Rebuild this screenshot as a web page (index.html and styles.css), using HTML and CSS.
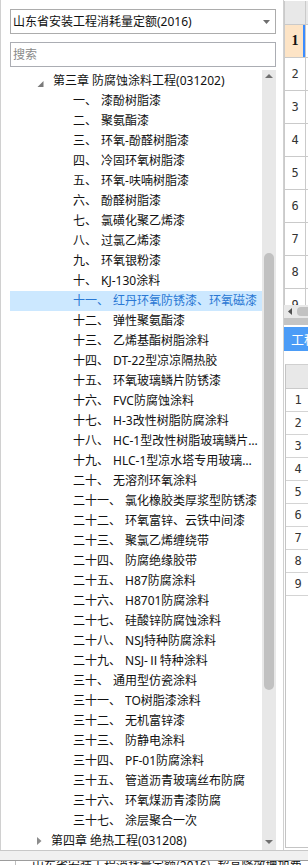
FILE: index.html
```html
<!DOCTYPE html>
<html lang="zh">
<head>
    <meta charset="UTF-8">
    <meta name="viewport" content="width=device-width, initial-scale=1.0">
    <title>定额章节</title>
    <link rel="stylesheet" href="styles.css">
</head>
<body>

<div class="main">
    <div class="side">
        <div class="combo">
            <span class="combo-text">山东省安装工程消耗量定额(2016)</span>
            <svg class="combo-arrow" width="7" height="4" viewBox="0 0 7 4"><polygon points="0,0 7,0 3.5,4" fill="#6e6e6e"/></svg>
        </div>
        <input class="search" type="text" placeholder="搜索">

        <div class="tree-box">
            <div class="tree">
                <div class="row chapter">
                    <svg class="toggle open" width="6" height="6" viewBox="0 0 6 6"><polygon points="6,0 6,6 0,6" fill="#7a7a7a"/></svg>
                    <span>第三章 防腐蚀涂料工程(031202)</span>
                </div>
                <div class="row item"><span class="num">一、</span><span class="label">漆酚树脂漆</span></div>
                <div class="row item"><span class="num">二、</span><span class="label">聚氨酯漆</span></div>
                <div class="row item"><span class="num">三、</span><span class="label">环氧-酚醛树脂漆</span></div>
                <div class="row item"><span class="num">四、</span><span class="label">冷固环氧树脂漆</span></div>
                <div class="row item"><span class="num">五、</span><span class="label">环氧-呋喃树脂漆</span></div>
                <div class="row item"><span class="num">六、</span><span class="label">酚醛树脂漆</span></div>
                <div class="row item"><span class="num">七、</span><span class="label">氯磺化聚乙烯漆</span></div>
                <div class="row item"><span class="num">八、</span><span class="label">过氯乙烯漆</span></div>
                <div class="row item"><span class="num">九、</span><span class="label">环氧银粉漆</span></div>
                <div class="row item"><span class="num">十、</span><span class="label">KJ-130涂料</span></div>
                <div class="row item selected"><span class="num">十一、</span><span class="label">红丹环氧防锈漆、环氧磁漆</span></div>
                <div class="row item"><span class="num">十二、</span><span class="label">弹性聚氨酯漆</span></div>
                <div class="row item"><span class="num">十三、</span><span class="label">乙烯基酯树脂涂料</span></div>
                <div class="row item"><span class="num">十四、</span><span class="label">DT-22型凉凉隔热胶</span></div>
                <div class="row item"><span class="num">十五、</span><span class="label">环氧玻璃鳞片防锈漆</span></div>
                <div class="row item"><span class="num">十六、</span><span class="label">FVC防腐蚀涂料</span></div>
                <div class="row item"><span class="num">十七、</span><span class="label">H-3改性树脂防腐涂料</span></div>
                <div class="row item"><span class="num">十八、</span><span class="label">HC-1型改性树脂玻璃鳞片防腐涂料</span></div>
                <div class="row item"><span class="num">十九、</span><span class="label">HLC-1型凉水塔专用玻璃钢防腐涂料</span></div>
                <div class="row item"><span class="num">二十、</span><span class="label">无溶剂环氧涂料</span></div>
                <div class="row item"><span class="num">二十一、</span><span class="label">氯化橡胶类厚浆型防锈漆</span></div>
                <div class="row item"><span class="num">二十二、</span><span class="label">环氧富锌、云铁中间漆</span></div>
                <div class="row item"><span class="num">二十三、</span><span class="label">聚氯乙烯缠绕带</span></div>
                <div class="row item"><span class="num">二十四、</span><span class="label">防腐绝缘胶带</span></div>
                <div class="row item"><span class="num">二十五、</span><span class="label">H87防腐涂料</span></div>
                <div class="row item"><span class="num">二十六、</span><span class="label">H8701防腐涂料</span></div>
                <div class="row item"><span class="num">二十七、</span><span class="label">硅酸锌防腐蚀涂料</span></div>
                <div class="row item"><span class="num">二十八、</span><span class="label">NSJ特种防腐涂料</span></div>
                <div class="row item"><span class="num">二十九、</span><span class="label">NSJ-Ⅱ特种涂料</span></div>
                <div class="row item"><span class="num">三十、</span><span class="label">通用型仿瓷涂料</span></div>
                <div class="row item"><span class="num">三十一、</span><span class="label">TO树脂漆涂料</span></div>
                <div class="row item"><span class="num">三十二、</span><span class="label">无机富锌漆</span></div>
                <div class="row item"><span class="num">三十三、</span><span class="label">防静电涂料</span></div>
                <div class="row item"><span class="num">三十四、</span><span class="label">PF-01防腐涂料</span></div>
                <div class="row item"><span class="num">三十五、</span><span class="label">管道沥青玻璃丝布防腐</span></div>
                <div class="row item"><span class="num">三十六、</span><span class="label">环氧煤沥青漆防腐</span></div>
                <div class="row item"><span class="num">三十七、</span><span class="label">涂层聚合一次</span></div>
                <div class="row chapter">
                    <svg class="toggle" width="5" height="8" viewBox="0 0 5 8"><polygon points="0,0 4.5,4 0,8" fill="#8c8c8c"/></svg>
                    <span>第四章 绝热工程(031208)</span>
                </div>
            </div>

            <div class="vscroll">
                <svg class="vs-up" width="8" height="4" viewBox="0 0 8 4"><polygon points="0,4 8,4 4,0" fill="#707070"/></svg>
                <div class="vs-thumb"></div>
                <svg class="vs-down" width="8" height="4" viewBox="0 0 8 4"><polygon points="0,0 8,0 4,4" fill="#707070"/></svg>
            </div>
        </div>
    </div>

    <div class="splitter"></div>

    <div class="right">
        <div class="sheet">
            <div class="srow head"><div class="rh"></div><div class="cell"></div></div>
            <div class="srow"><div class="rh active">1</div><div class="cell"></div></div>
            <div class="srow"><div class="rh">2</div><div class="cell"></div></div>
            <div class="srow"><div class="rh">3</div><div class="cell"></div></div>
            <div class="srow"><div class="rh">4</div><div class="cell"></div></div>
            <div class="srow"><div class="rh">5</div><div class="cell"></div></div>
            <div class="srow"><div class="rh">6</div><div class="cell"></div></div>
            <div class="srow"><div class="rh">7</div><div class="cell"></div></div>
            <div class="srow"><div class="rh">8</div><div class="cell"></div></div>
            <div class="srow"><div class="rh">9</div><div class="cell"></div></div>
        </div>
        <div class="hscroll">
            <svg class="hs-left" width="4" height="7" viewBox="0 0 4 7"><polygon points="4,0 4,7 0,3.5" fill="#505050"/></svg>
            <div class="hs-thumb"></div>
        </div>
        <div class="tabbar"></div>
        <div class="tab">工程量</div>
        <div class="grid2">
            <div class="grow head"></div>
            <div class="grow"><span class="gnum">1</span></div>
            <div class="grow"><span class="gnum">2</span></div>
            <div class="grow"><span class="gnum">3</span></div>
            <div class="grow"><span class="gnum">4</span></div>
            <div class="grow"><span class="gnum">5</span></div>
            <div class="grow"><span class="gnum">6</span></div>
            <div class="grow"><span class="gnum">7</span></div>
            <div class="grow"><span class="gnum">8</span></div>
            <div class="grow"><span class="gnum">9</span></div>
        </div>
    </div>
</div>

<div class="status">
    <div class="status-line">
        <span class="status-cell"></span>
        <span class="status-text">山东省安装工程消耗量定额(2016)_超高降效增加费，脚手架搭拆费用</span>
    </div>
</div>

</body>
</html>
```

FILE: styles.css
```css
* {
    box-sizing: border-box;
}
body {
    margin: 0;
    width: 308px;
    height: 865px;
    overflow: hidden;
    background-color: #f0f0f0;
    font-family: "Noto Sans", "Noto Sans CJK SC", sans-serif;
    font-size: 12px;
    color: #111;
}

/* main area */
.main {
    display: flex;
    height: 851px;
    border-bottom: 1px solid #c8c8c8;
}
.side {
    width: 283px;
    display: flex;
    flex-direction: column;
    padding: 9px 7px 0 9px;
    border-left: 1px solid #d0d0d0;
    background-color: #fff;
}
.combo {
    display: flex;
    align-items: center;
    height: 25px;
    padding: 0 5px 0 2px;
    border: 1px solid #acacac;
    background-color: #fff;
}
.combo-text {
    flex: 1;
    line-height: 23px;
    white-space: nowrap;
}
.search {
    height: 25px;
    margin: 8px 0 0;
    padding: 0 2px;
    border: 1px solid #abadb3;
    font-family: "Noto Sans", "Noto Sans CJK SC", sans-serif;
    font-size: 12px;
    outline: none;
}
.search::placeholder {
    color: #8a8a8a;
}

/* tree */
.tree-box {
    flex: 1;
    display: flex;
    margin-top: 3px;
    min-height: 0;
}
.tree {
    flex: 1;
    min-width: 0;
    padding-top: 1px;
    overflow: hidden;
}
.row {
    display: flex;
    align-items: center;
    height: 20px;
    line-height: 20px;
    white-space: nowrap;
}
.chapter {
    padding-left: 27px;
}
.chapter span {
    margin-left: 9px;
}
.toggle {
    flex: none;
}
.toggle.open {
    width: 7px;
    margin-top: 6px;
}
.item {
    padding-left: 63px;
    padding-right: 2px;
    gap: 4px;
}
.num {
    flex: none;
}
.label {
    flex: 0 1 auto;
    min-width: 0;
    overflow: hidden;
    text-overflow: ellipsis;
}
.selected {
    background-color: #cce8ff;
    color: #2a78d4;
}

/* vertical scrollbar */
.vscroll {
    width: 14px;
    flex: none;
    display: flex;
    flex-direction: column;
    align-items: center;
    background-color: #e8e8e8;
}
.vs-up {
    margin-top: 4px;
}
.vs-thumb {
    width: 10px;
    height: 437px;
    margin-top: 175px;
    border-radius: 5px;
    background-color: #c1c1c1;
}
.vs-down {
    margin-top: auto;
    margin-bottom: 6px;
}

.splitter {
    width: 1px;
    background-color: #d0d0d0;
}

/* right panel */
.right {
    flex: 1;
    min-width: 0;
    display: flex;
    flex-direction: column;
    background-color: #fff;
    overflow: hidden;
    font-family: "DejaVu Sans Mono", monospace;
    font-size: 12px;
    color: #333;
}
.sheet {
    height: 305px;
    padding-top: 1px;
    overflow: hidden;
}
.srow {
    display: flex;
    height: 33px;
    border-bottom: 1px solid #cacaca;
}
.srow.head {
    height: 24px;
    background-color: #e8e8e8;
}
.rh {
    flex: none;
    width: 22px;
    display: flex;
    align-items: center;
    justify-content: center;
    border-left: 1px solid #cacaca;
    border-right: 1px solid #cacaca;
}
.rh.active {
    background-color: #fde4c6;
    box-shadow: inset -2px 0 0 #3b8cff;
    font-family: "Liberation Serif", serif;
    font-weight: bold;
    font-size: 14px;
    color: #111;
}
.cell {
    flex: 1;
}
.hscroll {
    display: flex;
    align-items: center;
    height: 13px;
    background-color: #e8e8e8;
}
.hs-left {
    margin-left: 4px;
    flex: none;
}
.hs-thumb {
    flex: none;
    width: 30px;
    height: 9px;
    margin-left: 5px;
    border-radius: 4px;
    background-color: #c2c2c2;
}
.tabbar {
    height: 7px;
    background-color: #c4c4c4;
}
.tab {
    height: 24px;
    margin-top: 2px;
    padding-left: 7px;
    line-height: 24px;
    white-space: nowrap;
    background-color: #4b9cf7;
    color: #fff;
    font-family: "Noto Sans CJK SC", sans-serif;
    font-size: 13px;
}
.grid2 {
    flex: 1;
    margin: 13px 0 2px 1px;
    border-top: 1px solid #d0d0d0;
    border-left: 1px solid #c4c4c4;
    border-bottom: 1px solid #c4c4c4;
}
.grow {
    display: flex;
    align-items: center;
    height: 23px;
    line-height: 16px;
    border-bottom: 1px solid #d4d4d4;
}
.grow.head {
    height: 24px;
    background-color: #e8e8e8;
    border-bottom-color: #cacaca;
}
.gnum {
    width: 24px;
    flex: none;
    text-align: center;
}

/* bottom strip */
.status {
    height: 14px;
    padding-top: 9px;
}
.status-line {
    display: flex;
    height: 5px;
    overflow: hidden;
    border-top: 1px solid #9c9c9c;
    background-color: #fff;
}
.status-cell {
    width: 16px;
    flex: none;
    border-right: 1px solid #c0c0c0;
}
.status-text {
    margin: -4px 0 0 16px;
    line-height: 16px;
    white-space: nowrap;
    font-family: "Noto Sans CJK SC", sans-serif;
    font-size: 12px;
}
```
